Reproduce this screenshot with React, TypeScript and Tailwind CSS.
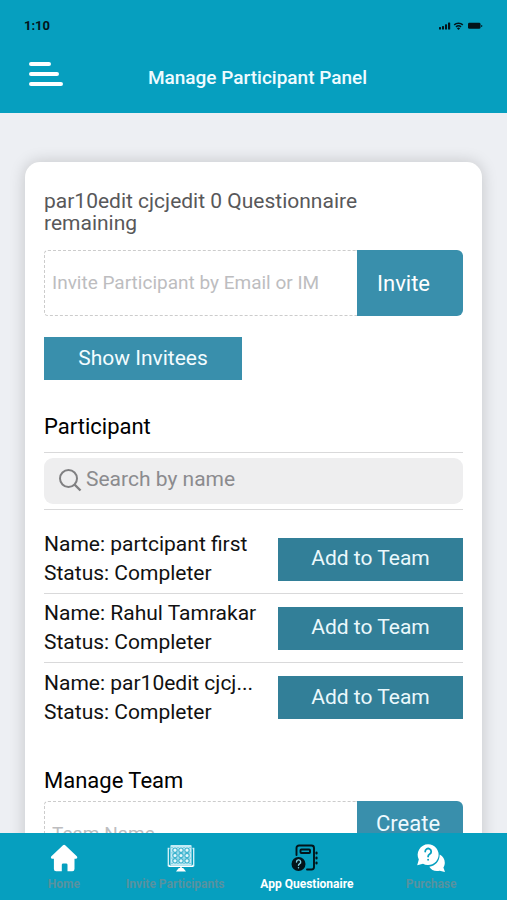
import React from "react";

const participants = ["partcipant first", "Rahul Tamrakar", "par10edit cjcj..."];

function StatusIcons() {
  return (
    <svg width="46" height="10" viewBox="0 0 46 10" fill="#03141a" aria-hidden="true">
      <rect x="2" y="6" width="2" height="2.5" rx="0.5" />
      <rect x="5" y="5" width="2" height="3.5" rx="0.5" />
      <rect x="8" y="3.3" width="2" height="5.2" rx="0.5" />
      <rect x="11" y="1.5" width="2.2" height="7" rx="0.5" />
      <g fill="none" stroke="#03141a" strokeWidth="1.5">
        <path d="M17.2 3.9a6.4 6.4 0 0 1 8.6 0" />
        <path d="M19 5.9a3.7 3.7 0 0 1 5 0" />
      </g>
      <path d="M21.5 9 19.9 7.3a2.4 2.4 0 0 1 3.2 0z" />
      <rect x="31" y="1.8" width="12.5" height="6" rx="1.4" />
      <rect x="44.2" y="4" width="1" height="2" rx="0.5" />
    </svg>
  );
}

function MenuIcon() {
  return (
    <svg width="36" height="26" viewBox="0 0 36 26" fill="none" stroke="#fff" strokeWidth="4" strokeLinecap="round" aria-hidden="true">
      <path d="M3 3h18M3 13h26M3 23h30" />
    </svg>
  );
}

function SearchIcon() {
  return (
    <svg width="24" height="24" viewBox="0 0 24 24" fill="none" stroke="#808082" strokeWidth="2" aria-hidden="true">
      <circle cx="10.5" cy="9.5" r="8.5" />
      <path d="m16.5 15.5 6 6" strokeWidth="2.4" />
    </svg>
  );
}

function HomeIcon() {
  return (
    <svg width="28" height="28" viewBox="0 0 28 28" fill="#fff" aria-hidden="true">
      <path d="M13 1.2a1.6 1.6 0 0 1 2.2 0l11.6 11c1 1 .4 2.5-.9 2.5h-1.4V25a2.2 2.2 0 0 1-2.2 2.2h-4.8v-6.4a1.4 1.4 0 0 0-1.4-1.4h-2.9a1.4 1.4 0 0 0-1.4 1.4v6.4H6.1A2.2 2.2 0 0 1 3.9 25V14.7H2.3c-1.3 0-1.900-1.500-.9-2.500z" />
    </svg>
  );
}

function ScreenIcon() {
  const xs = [8, 14, 20];
  const ys = [6.2, 11.5, 16.8];
  return (
    <svg width="40" height="28" viewBox="-12 0 40 28" aria-hidden="true">
      <path d="M2.5 4.5H1.3v17h1.5M25.5 4.5h1.2v17h-1.5" fill="none" stroke="#d8f3fa" strokeWidth="1.3" />
      <rect x="3.4" y="1" width="21.2" height="20.5" rx="1" fill="#c4ebf5" />
      <g fill="#e6f8fc" stroke="#3db3ce" strokeWidth="1.2">
        {ys.map((y) => xs.map((x) => <circle key={`${x}-${y}`} cx={x} cy={y} r="2.2" />))}
      </g>
      <g fill="#3fb3ce">
        {[5, 11, 17, 23].map((x) => [3.5, 8.8, 14.1, 19.4].map((y) => (
          <circle key={`${x}-${y}`} cx={x} cy={y} r="0.6" />
        )))}
      </g>
      <path d="M1.5 22.2h25M14 22v4" stroke="#fff" strokeWidth="1.6" />
      <path d="M11.8 24h4.4l2.8 3.5H9z" fill="#fff" />
    </svg>
  );
}

function NotebookIcon() {
  return (
    <svg width="32" height="28" viewBox="0 0 32 28" fill="none" stroke="#03141a" strokeWidth="1.9" strokeLinecap="round" aria-hidden="true">
      <path d="M5.5 11V4A2.5 2.5 0 0 1 8 1.5h12.5A2.5 2.5 0 0 1 23 4v19a2.5 2.5 0 0 1-2.5 2.5H16" />
      <rect x="9.5" y="5.5" width="9.5" height="3.5" rx="0.8" />
      <path d="M25.5 8.5v1M25.5 13.5v1M25.5 18.5v1" strokeWidth="2.2" />
      <circle cx="7.5" cy="20" r="7" fill="#03141a" stroke="none" />
      <path d="M5.5 18a2.1 2.1 0 1 1 3 1.9c-.7.4-1 .7-1 1.4M7.5 23.6v.1" stroke="#7fd0e2" strokeWidth="1.4" />
    </svg>
  );
}

function ChatIcon() {
  return (
    <svg width="28" height="28" viewBox="0 0 28 28" aria-hidden="true">
      <path d="M22.7 10.5c3.4 1.7 5.1 4.8 5.1 8.2 0 1.8-.5 3.4-1.4 4.7l1.6 4.6-5.3-1.3c-4.2 1.2-8.5-.3-10.4-3.9 6-.8 10.3-5.4 10.4-12.3z" fill="#fff" />
      <path d="M11 .3a10.4 10.4 0 1 1-5 19.4L.2 21.2l1.6-5.6A10.5 10.5 0 0 1 11 .3z" fill="#fff" />
      <path d="M8.2 7.6a3 3 0 1 1 4.6 2.5c-1.2.8-1.7 1.2-1.7 2.5M11.1 15.6v.2" fill="none" stroke="#069fbf" strokeWidth="1.8" strokeLinecap="round" />
    </svg>
  );
}

const tabs = [
  { label: "Home", icon: <HomeIcon />, color: "text-[#5792a0]" },
  { label: "Invite Participants", icon: <ScreenIcon />, color: "text-[#5792a0]" },
  { label: "App Questionaire", icon: <NotebookIcon />, color: "text-white" },
  { label: "Purchase", icon: <ChatIcon />, color: "text-[#5792a0]" },
];

export default function App() {
  return (
    <div className="flex h-screen flex-col bg-[#edeff3] font-[Roboto,sans-serif] text-black">
      <header className="bg-[#069fbf] pt-4 pb-[19px]">
        <div className="flex h-5 items-center justify-between px-6 text-[13px] font-bold text-[#03141a]">
          <span>1:10</span>
          <StatusIcons />
        </div>
        <div className="mt-[26px] grid h-8 grid-cols-[1fr_auto_1fr] items-center pl-7">
          <button type="button" aria-label="Open menu" className="-mt-2 justify-self-start">
            <MenuIcon />
          </button>
          <h1 className="pr-5 text-[19px] font-medium text-[#effbff]">Manage Participant Panel</h1>
        </div>
      </header>

      <main className="min-h-0 flex-1 overflow-hidden px-[25px] pt-[49px]">
        <section className="rounded-t-[15px] bg-white px-[19px] pt-7 shadow-[0_0_16px_rgba(0,0,0,0.18)]">
          <p className="pr-10 text-[21px] leading-[22px] text-[#58585a]">
            par10edit cjcjedit 0 Questionnaire remaining
          </p>

          <form className="mt-4 flex h-[66px]" onSubmit={(e) => e.preventDefault()}>
            <input
              type="text"
              aria-label="Invite participant"
              placeholder="Invite Participant by Email or IM"
              className="min-w-0 flex-1 rounded-l-[4px] border border-r-0 border-dashed border-[#cccccc] px-[7px] text-[19px] outline-none placeholder:text-[#bdbdbf]"
            />
            <button type="submit" className="w-[106px] rounded-r-[6px] bg-[#398fac] px-5 text-left text-[22px] text-white">
              Invite
            </button>
          </form>

          <button type="button" className="mt-[21px] h-[43px] w-[198px] bg-[#398fac] text-[21px] text-[#f3fcff]">
            Show Invitees
          </button>

          <h2 className="mt-8 text-[22px] leading-[30px]">Participant</h2>
          <div className="mt-[10px] border-y border-[#d9d9da] py-[5px]">
            <label className="flex h-[46px] items-center gap-1 rounded-[9px] bg-[#eeeeef] px-[14px]">
              <SearchIcon />
              <input
                type="text"
                aria-label="Search by name"
                placeholder="Search by name"
                className="min-w-0 flex-1 bg-transparent pb-[2px] text-[21px] outline-none placeholder:text-[#8b8b8e]"
              />
            </label>
          </div>

          <ul className="mt-[15px] divide-y divide-[#d9d9da]">
            {participants.map((name) => (
              <li key={name} className="flex h-[69px] items-center justify-between">
                <div className="text-[21px] leading-[29px] text-[#111111]">
                  <p>Name: {name}</p>
                  <p>Status: Completer</p>
                </div>
                <button type="button" className="h-[43px] w-[185px] bg-[#327f98] text-[21px] text-[#eaf8fc]">
                  Add to Team
                </button>
              </li>
            ))}
          </ul>

          <h2 className="mt-[34px] text-[22px] leading-[30px]">Manage Team</h2>
          <form className="mt-[5px] flex h-[66px]" onSubmit={(e) => e.preventDefault()}>
            <input
              type="text"
              aria-label="Team name"
              placeholder="Team Name"
              className="min-w-0 flex-1 rounded-l-[4px] border border-r-0 border-dashed border-[#cccccc] px-[7px] text-[19px] outline-none placeholder:text-[#bdbdbf]"
            />
            <button type="submit" className="flex w-[106px] items-start rounded-r-[6px] bg-[#398fac] px-[19px] pt-3 text-[22px] leading-[22px] text-[#eefaff]">
              Create
            </button>
          </form>
        </section>
      </main>

      <nav className="grid h-[67px] grid-cols-[92fr_131fr_133fr_116fr] bg-[#069fbf] px-[18px] pt-[11px] pb-2">
        {tabs.map((tab) => (
          <a key={tab.label} href="#" className={`flex flex-col items-center gap-1 text-xs leading-4 font-bold whitespace-nowrap ${tab.color}`}>
            {tab.icon}
            {tab.label}
          </a>
        ))}
      </nav>
    </div>
  );
}
